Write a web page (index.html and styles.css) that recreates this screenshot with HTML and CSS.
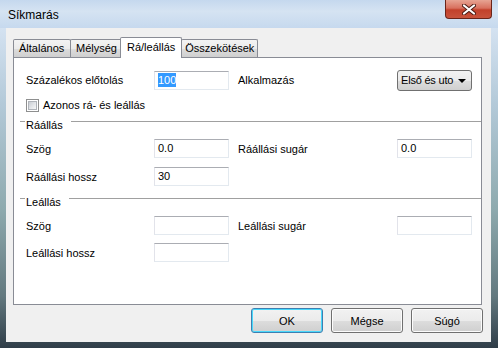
FILE: index.html
```html
<!DOCTYPE html>
<html lang="hu">
<head>
    <meta charset="UTF-8">
    <title>Síkmarás</title>
    <link rel="stylesheet" href="styles.css">
</head>
<body>
    <div class="window">
        <div class="titlebar">
            <span class="title">Síkmarás</span>
            <div class="close">
                <svg width="14" height="11" viewBox="0 0 14 11">
                    <path d="M2 1.5 L12 9.5 M12 1.5 L2 9.5" stroke="#4a1a12" stroke-width="4" stroke-linecap="round"/>
                    <path d="M2 1.5 L12 9.5 M12 1.5 L2 9.5" stroke="#ffffff" stroke-width="2.2" stroke-linecap="round"/>
                </svg>
            </div>
        </div>

        <div class="client">
            <div class="tabs">
                <div class="tab">Általános</div>
                <div class="tab">Mélység</div>
                <div class="tab active">Rá/leállás</div>
                <div class="tab last">Összekötések</div>
            </div>

            <div class="panel">
                <div class="row first">
                    <label>Százalékos előtolás</label>
                    <div class="field"><span class="selected">100</span></div>
                    <label class="second">Alkalmazás</label>
                    <div class="combo">Első és uto<span class="arrow"></span></div>
                </div>

                <div class="check-row">
                    <span class="checkbox"><span class="check-inner"></span></span>
                    <span>Azonos rá- és leállás</span>
                </div>

                <div class="group g1"><span>Ráállás</span></div>

                <div class="row r-szog1">
                    <label>Szög</label>
                    <div class="field">0.0</div>
                    <label class="second">Ráállási sugár</label>
                    <div class="field">0.0</div>
                </div>

                <div class="row r-hossz1">
                    <label>Ráállási hossz</label>
                    <div class="field">30</div>
                </div>

                <div class="group g2"><span>Leállás</span></div>

                <div class="row r-szog2">
                    <label>Szög</label>
                    <div class="field"></div>
                    <label class="second">Leállási sugár</label>
                    <div class="field"></div>
                </div>

                <div class="row r-hossz2">
                    <label>Leállási hossz</label>
                    <div class="field"></div>
                </div>
            </div>

            <div class="buttons">
                <button class="default">OK</button>
                <button>Mégse</button>
                <button>Súgó</button>
            </div>
        </div>
    </div>
</body>
</html>
```

FILE: styles.css
```css
body {
    margin: 0;
    font-family: "Liberation Sans", Arial, sans-serif;
    font-size: 11px;
    color: #000;
}
.window {
    width: 498px;
    height: 348px;
    overflow: hidden;
    background: linear-gradient(180deg, #c6d8ec 0%, #d4e2f1 8%, #b3c9d8 30%, #8eaaae 60%, #63797f 85%, #2f3d48 100%);
}
.titlebar {
    height: 28px;
    display: flex;
    align-items: flex-start;
    background: linear-gradient(180deg, #c5d8ee 0%, #d5e3f2 40%, #c6d9ee 100%);
}
.title {
    font-size: 12px;
    margin: 8px 0 0 8px;
    color: #000;
}
.close {
    margin-left: auto;
    margin-right: 6px;
    width: 45px;
    height: 18px;
    border: 1px solid #6a2419;
    border-top: none;
    border-radius: 0 0 4px 4px;
    background: linear-gradient(180deg, #e7a493 0%, #d8705e 45%, #c2412b 55%, #c8533c 100%);
    display: flex;
    align-items: center;
    justify-content: center;
}
.client {
    margin-left: 6px;
    width: 485px;
    height: 314px;
    background: #f0f0f0;
}
.tabs {
    display: flex;
    align-items: flex-end;
    height: 20px;
    padding: 9px 0 0 7px;
    position: relative;
    z-index: 1;
}
.tab {
    height: 17px;
    line-height: 17px;
    padding: 0 5px;
    border: 1px solid #898c95;
    border-bottom: none;
    margin-right: -1px;
    background: linear-gradient(180deg, #f3f3f3 0%, #ebebeb 50%, #dddddd 51%, #cfcfcf 100%);
    border-radius: 2px 2px 0 0;
}
.tab:first-child {
    width: 46px;
}
.tab.last {
    padding: 0 3px;
}
.tab.active {
    height: 20px;
    line-height: 19px;
    margin: 0 -1px -1px -2px;
    padding: 0 6px;
    background: #fff;
    position: relative;
    z-index: 2;
}
.panel {
    margin-left: 7px;
    border: 1px solid #898c95;
    background: #fff;
    padding: 11px 9px 0 12px;
    width: 446px;
    height: 235px;
}
.row {
    display: grid;
    grid-template-columns: 128px 75px 168px 75px;
    align-items: center;
    height: 19px;
}
.second {
    padding-left: 9px;
}
.field {
    height: 17px;
    line-height: 17px;
    border: 1px solid #e3e9ef;
    border-top-color: #abadb3;
    border-left-color: #e2e3ea;
    padding-left: 3px;
    background: #fff;
}
.selected {
    background: #3399ff;
    color: #fff;
    padding: 1px 0;
}
.combo {
    height: 19px;
    line-height: 19px;
    margin-top: 1px;
    border: 1px solid #707070;
    border-radius: 3px;
    padding-left: 3px;
    background: linear-gradient(180deg, #f2f2f2 0%, #ebebeb 50%, #dddddd 51%, #cfcfcf 100%);
    display: flex;
    align-items: center;
    letter-spacing: -0.2px;
}
.arrow {
    margin-left: auto;
    margin-right: 5px;
    width: 0;
    height: 0;
    border-left: 4px solid transparent;
    border-right: 4px solid transparent;
    border-top: 4px solid #000;
}
.check-row {
    display: flex;
    align-items: center;
    gap: 4px;
    height: 18px;
    margin-top: 8px;
}
.checkbox {
    width: 11px;
    height: 11px;
    border: 1px solid #8e8f8f;
    background: #fff;
    display: flex;
    align-items: center;
    justify-content: center;
}
.check-inner {
    width: 7px;
    height: 7px;
    border: 1px solid #b0b4ba;
    background: linear-gradient(135deg, #c9cdd3 0%, #e6e8eb 60%, #f6f6f6 100%);
}
.group {
    display: flex;
    height: 13px;
    line-height: 13px;
    margin: 5px -9px 0 -6px;
}
.group::before,
.group::after {
    content: "";
    border-top: 1px solid #a0a0a0;
    margin-top: 2px;
}
.group::before {
    width: 5px;
    margin-right: 1px;
}
.group::after {
    flex: 1;
    margin-left: 8px;
}
.r-szog1 {
    margin-top: 7px;
}
.r-hossz1 {
    margin-top: 9px;
}
.g2 {
    margin-top: 10px;
}
.r-szog2 {
    margin-top: 7px;
}
.r-hossz2 {
    margin-top: 8px;
}
.buttons {
    display: flex;
    justify-content: flex-end;
    gap: 8px;
    padding: 3px 8px 0 0;
}
button {
    width: 72px;
    height: 25px;
    font-family: inherit;
    font-size: 11px;
    color: #000;
    border: 1px solid #707070;
    border-radius: 3px;
    background: linear-gradient(180deg, #f2f2f2 0%, #ebebeb 50%, #dddddd 51%, #cfcfcf 100%);
    box-shadow: inset 0 0 0 1px #fcfcfc;
}
button.default {
    border-color: #3c7fb1;
    box-shadow: inset 0 0 0 1px #48d8fb;
}
```
